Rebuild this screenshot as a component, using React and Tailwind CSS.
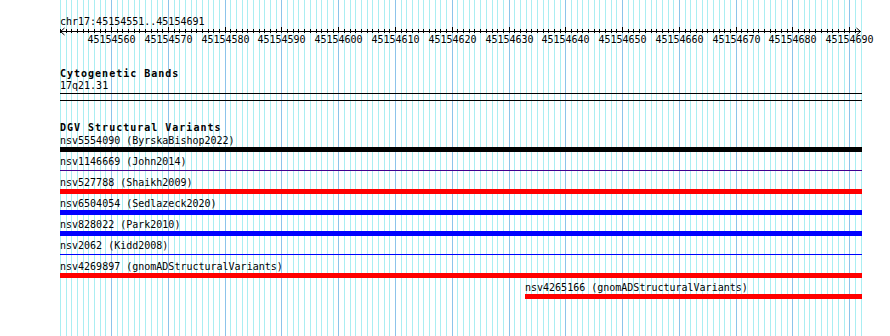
import React from 'react';

const START = 45154551;
const BASES = 141;
const LEFT = 60;
const PX = 5.678;

const baseX = (k) => Math.round(LEFT + k * PX) + 0.5;

const features = [
  { label: 'nsv5554090 (ByrskaBishop2022)', color: 'bg-black', thick: true },
  { label: 'nsv1146669 (John2014)', color: 'bg-[#400090]', thick: false },
  { label: 'nsv527788 (Shaikh2009)', color: 'bg-[#ff0000]', thick: true },
  { label: 'nsv6504054 (Sedlazeck2020)', color: 'bg-[#0000ff]', thick: true },
  { label: 'nsv828022 (Park2010)', color: 'bg-[#0000ff]', thick: true },
  { label: 'nsv2062 (Kidd2008)', color: 'bg-[#0000ff]', thick: false },
  { label: 'nsv4269897 (gnomADStructuralVariants)', color: 'bg-[#ff0000]', thick: true },
  { label: 'nsv4265166 (gnomADStructuralVariants)', color: 'bg-[#ff0000]', thick: true, shifted: true },
];

// background gridlines, one per base, darker every 10
const Grid = () => {
  const lines = [];
  for (let k = 0; k <= BASES; k++) {
    const major = (START + k) % 10 === 0;
    lines.push(
      <line key={k} x1={baseX(k)} x2={baseX(k)} y1={0} y2={336} stroke={major ? '#8cc4ea' : '#aaeef2'} strokeWidth={1} />
    );
  }
  return (
    <svg className="absolute inset-0" width={890} height={336}>
      {lines}
    </svg>
  );
};

const Ruler = () => {
  const ticks = [];
  const labels = [];
  for (let k = 0; k <= BASES - 1; k++) {
    const x = baseX(k);
    const major = (START + k) % 10 === 0;
    ticks.push(<line key={k} x1={x} x2={x} y1={major ? 0 : 2} y2={6} stroke="#000" strokeWidth={1} />);
    if (major) {
      labels.push(
        <text key={'l' + k} x={x} y={16.3} textAnchor="middle" fontSize={10} fontFamily="'DejaVu Sans Mono', monospace" fill="#000">
          {START + k}
        </text>
      );
    }
  }
  return (
    <svg className="block" width={890} height={20}>
      <line x1={60} x2={861} y1={4.5} y2={4.5} stroke="#000" strokeWidth={1} />
      <polyline points="64.5,1 60.5,4.5 64.5,8" fill="none" stroke="#000" strokeWidth={1} />
      <polyline points="856.5,1 860.5,4.5 856.5,8" fill="none" stroke="#000" strokeWidth={1} />
      {ticks}
      {labels}
    </svg>
  );
};

const FeatureRow = ({ f }) => (
  <div className={`h-[21px] flex flex-col ${f.shifted ? 'pl-[465px]' : ''}`}>
    <div className="h-[13px] leading-[13px] whitespace-nowrap">{f.label}</div>
    <div className="h-[5px] flex flex-col">
      {f.thick ? <div className={`h-[5px] ${f.color}`} /> : <div className={`mt-[2px] h-px ${f.color}`} />}
    </div>
  </div>
);

export default function App() {
  return (
    <div className="relative w-[890px] h-[336px] overflow-hidden bg-white text-black font-['DejaVu_Sans_Mono',monospace] text-[10px]">
      <Grid />
      <div className="relative flex flex-col">
        <div className="pt-[16px] pl-[60px] leading-[11px] h-[27px] whitespace-nowrap">chr17:45154551..45154691</div>
        <Ruler />

        <div className="pl-[60px] w-[862px] flex flex-col">
          <div className="mt-[21px] h-[12px] leading-[12px] font-bold tracking-[1px]">Cytogenetic Bands</div>
          <div className="h-[12px] leading-[12px]">17q21.31</div>
          <div className="mt-[1px] h-px bg-black" />
          <div className="mt-[6px] h-px bg-black" />

          <div className="mt-[20px] h-[13px] leading-[13px] font-bold tracking-[1px]">DGV Structural Variants</div>
          {features.map((f) => (
            <FeatureRow key={f.label} f={f} />
          ))}
        </div>
      </div>
    </div>
  );
}
